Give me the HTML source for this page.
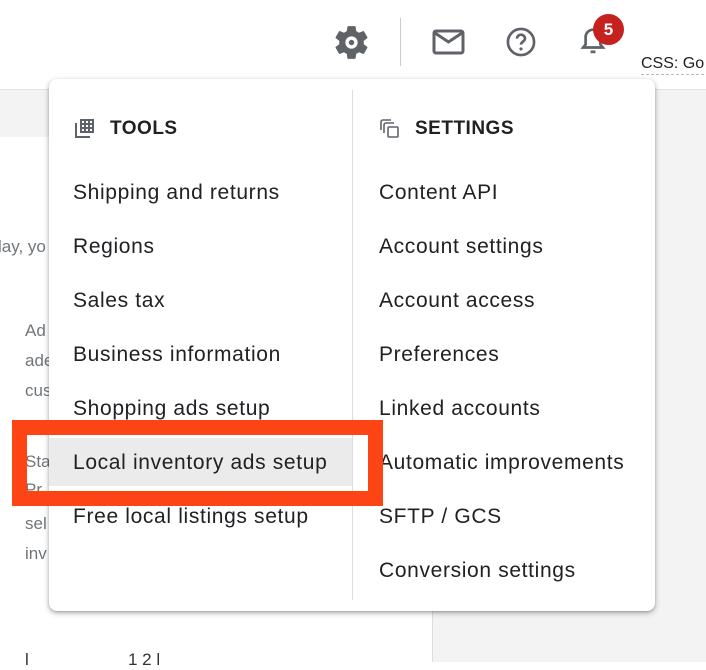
<!DOCTYPE html>
<html><head><style>
body{margin:0;width:706px;height:662px;overflow:hidden;background:#fff;font-family:"Liberation Sans",Arial,sans-serif;position:relative}
.abs{position:absolute}
.g{color:#70757a;font-size:17px}
.menu{left:49px;top:79px;width:606px;height:532px;background:#fff;border-radius:8px;box-shadow:0 2px 6px rgba(0,0,0,.3),0 1px 2px rgba(0,0,0,.15)}
.item{position:absolute;font-size:21px;letter-spacing:0.65px;color:#202124;white-space:nowrap}
.hdr{position:absolute;font-size:19px;font-weight:bold;color:#202124;letter-spacing:.5px}
</style></head><body>
<div class="abs" style="left:0;top:90px;width:706px;height:572px;background:#f3f3f3"></div>
<div class="abs" style="left:0;top:137px;width:432px;height:525px;background:#fff;border-right:1px solid #ddd"></div>
<div class="abs" style="left:0;top:89px;width:706px;height:1px;background:#e3e3e3"></div>
<div class="abs g" style="left:-2px;top:237px">lay, yo</div>
<div class="abs g" style="left:25px;top:321px">Ad</div>
<div class="abs g" style="left:25px;top:351px">ade</div>
<div class="abs g" style="left:25px;top:381px">cus</div>
<div class="abs g" style="left:25px;top:452px">Sta</div>
<div class="abs g" style="left:25px;top:480px">Pr</div>
<div class="abs g" style="left:25px;top:514px">sel</div>
<div class="abs g" style="left:25px;top:544px">inv</div>
<div class="abs" style="left:25px;top:650px;font-size:17px;color:#333">l&nbsp;&nbsp;&nbsp;&nbsp;&nbsp;&nbsp;&nbsp;&nbsp;&nbsp;&nbsp;&nbsp;&nbsp;&nbsp;&nbsp;&nbsp;&nbsp;&nbsp;&nbsp;&nbsp;&nbsp;&nbsp;1 2 l</div>
<svg class="abs" style="left:331px;top:22px" width="41" height="41" viewBox="0 0 24 24"><path fill="#5f6368" d="M19.14 12.94c.04-.3.06-.61.06-.94 0-.32-.02-.64-.07-.94l2.03-1.58a.49.49 0 00.12-.61l-1.92-3.32a.49.49 0 00-.59-.22l-2.39.96c-.5-.38-1.03-.7-1.62-.94l-.36-2.54a.48.48 0 00-.48-.41h-3.84a.48.48 0 00-.47.41l-.36 2.54c-.59.24-1.13.57-1.62.94l-2.39-.96a.48.48 0 00-.59.22L2.74 8.87a.47.47 0 00.12.61l2.03 1.58c-.05.3-.09.63-.09.94s.02.64.07.94l-2.03 1.58a.49.49 0 00-.12.61l1.92 3.32c.12.22.37.29.59.22l2.39-.96c.5.38 1.03.7 1.62.94l.36 2.54c.05.24.24.41.48.41h3.84c.24 0 .44-.17.47-.41l.36-2.54c.59-.24 1.13-.56 1.62-.94l2.39.96c.22.08.47 0 .59-.22l1.92-3.32c.12-.22.07-.47-.12-.61l-2.01-1.58zM12 15.6a3.6 3.6 0 110-7.2 3.6 3.6 0 010 7.2zm0-2a1.6 1.6 0 100-3.2 1.6 1.6 0 000 3.2z" fill-rule="evenodd"/></svg>
<div class="abs" style="left:400px;top:18px;width:1px;height:48px;background:#ccc"></div>
<svg class="abs" style="left:432px;top:28px" width="33" height="28" viewBox="0 0 33 28"><rect x="2" y="3" width="29" height="22" rx="2" fill="none" stroke="#5f6368" stroke-width="3"/><path d="M3 5l13.5 9L30 5" fill="none" stroke="#5f6368" stroke-width="3"/></svg>
<svg class="abs" style="left:505px;top:26px" width="32" height="32" viewBox="0 0 24 24"><circle cx="12" cy="12" r="9.8" fill="none" stroke="#5f6368" stroke-width="2"/><path d="M9 9.5a3 3 0 116 0c0 2-3 2.2-3 4.5" fill="none" stroke="#5f6368" stroke-width="2"/><circle cx="12" cy="17.2" r="1.2" fill="#5f6368"/></svg>
<svg class="abs" style="left:578px;top:26px" width="30" height="32" viewBox="0 0 24 26"><path d="M12 3a6 6 0 00-6 6v6l-2 2.5h16L18 15V9a6 6 0 00-6-6z" fill="none" stroke="#5f6368" stroke-width="2.2"/><path d="M10 21h4" stroke="#5f6368" stroke-width="2.2"/></svg>
<div class="abs" style="left:593px;top:14px;width:31px;height:31px;border-radius:50%;background:#c5221f;color:#fff;font-size:17px;text-align:center;line-height:31px;font-weight:bold">5</div>
<div class="abs" style="left:641px;top:55px;font-size:16px;color:#202124;white-space:nowrap;border-bottom:1px dashed #bbb;padding-bottom:1px">CSS: Go</div>
<div class="abs menu">
 <div class="abs" style="left:303px;top:11px;width:1px;height:510px;background:#ddd"></div>
 <div class="abs" style="left:0;top:359px;width:303px;height:48px;background:#ebebeb"></div>
 <svg class="abs" style="left:26px;top:39px" width="20" height="20" viewBox="0 0 20 20"><path d="M1 5v14h14" fill="none" stroke="#5f6368" stroke-width="2"/><rect x="5" y="1" width="14" height="14" fill="#5f6368"/><g fill="#fff"><rect x="7" y="3" width="2" height="2"/><rect x="11" y="3" width="2" height="2"/><rect x="15" y="3" width="2" height="2"/><rect x="7" y="7" width="2" height="2"/><rect x="11" y="7" width="2" height="2"/><rect x="15" y="7" width="2" height="2"/><rect x="7" y="11" width="2" height="2"/><rect x="11" y="11" width="2" height="2"/><rect x="15" y="11" width="2" height="2"/></g></svg>
 <div class="hdr" style="left:61px;top:39px">TOOLS</div>
 <svg class="abs" style="left:331px;top:40px" width="20" height="20" viewBox="0 0 20 20"><g fill="none" stroke="#5f6368" stroke-width="1.6"><path d="M1 11V3a2 2 0 012-2h8"/><path d="M4 14V6a2 2 0 012-2h8"/><rect x="8" y="8" width="10" height="10" rx="1"/></g></svg>
 <div class="hdr" style="left:366px;top:39px">SETTINGS</div>
 <div class="item" style="left:24px;top:102px">Shipping and returns</div>
 <div class="item" style="left:24px;top:156px">Regions</div>
 <div class="item" style="left:24px;top:210px">Sales tax</div>
 <div class="item" style="left:24px;top:264px">Business information</div>
 <div class="item" style="left:24px;top:318px">Shopping ads setup</div>
 <div class="item" style="left:24px;top:372px">Local inventory ads setup</div>
 <div class="item" style="left:24px;top:426px">Free local listings setup</div>
 <div class="item" style="left:330px;top:102px">Content API</div>
 <div class="item" style="left:330px;top:156px">Account settings</div>
 <div class="item" style="left:330px;top:210px">Account access</div>
 <div class="item" style="left:330px;top:264px">Preferences</div>
 <div class="item" style="left:330px;top:318px">Linked accounts</div>
 <div class="item" style="left:330px;top:372px">Automatic improvements</div>
 <div class="item" style="left:330px;top:426px">SFTP / GCS</div>
 <div class="item" style="left:330px;top:480px">Conversion settings</div>
</div>
<div class="abs" style="left:12px;top:420px;width:341px;height:56px;border:15px solid #fc4414"></div>
</body></html>
